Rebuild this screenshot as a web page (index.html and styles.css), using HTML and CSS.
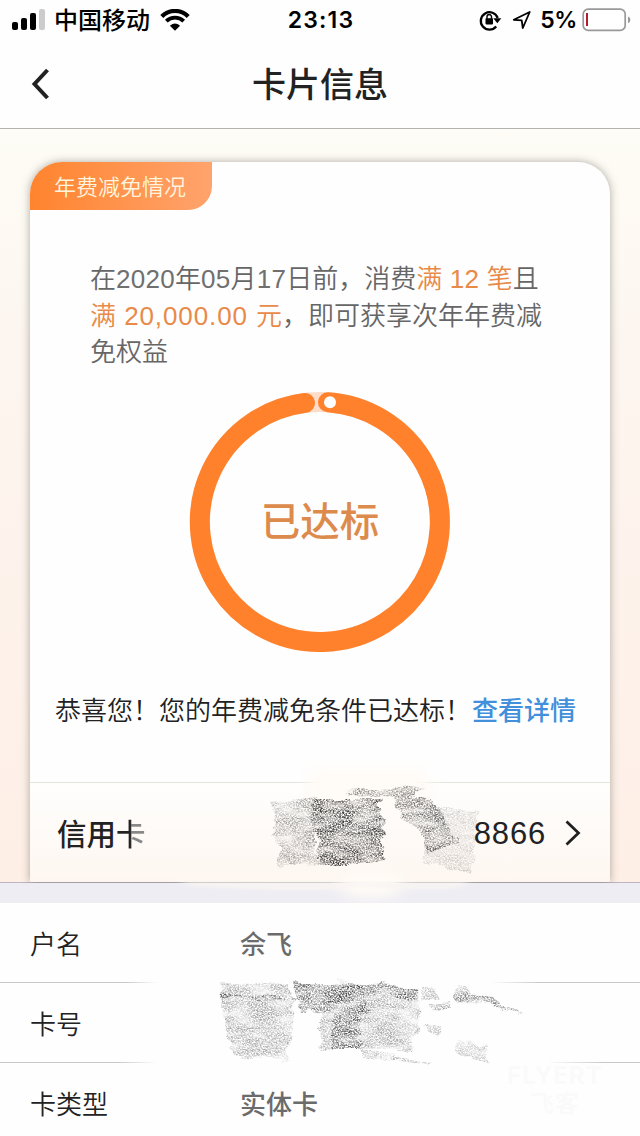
FILE: index.html
```html
<!DOCTYPE html>
<html lang="zh-CN">
<head>
<meta charset="utf-8">
<title>卡片信息</title>
<link rel="stylesheet" href="styles.css">
</head>
<body>
<div class="screen">
  <header class="status">
    <div class="status-left">
      <svg width="34" height="22" viewBox="0 0 34 22"><g fill="#000"><rect x="0" y="13" width="6" height="8" rx="2"/><rect x="9" y="9" width="6" height="12" rx="2"/><rect x="18" y="4" width="6" height="17" rx="2"/></g><rect x="27" y="0" width="6" height="21" rx="2" fill="#ccc"/></svg>
      <span class="carrier">中国移动</span>
      <svg class="wifi" width="30" height="22" viewBox="0 0 30 22"><path d="M1.8 7.4A18.6 18.6 0 0 1 28.200 7.400" fill="none" stroke="#000" stroke-width="4.200"/><path d="M6.300 12.200A12.300 12.300 0 0 1 23.700 12.200" fill="none" stroke="#000" stroke-width="3.800"/><path d="M15 21.800L9.900 16.700Q15 12.300 20.100 16.700Z"/></svg>
    </div>
    <span class="time">23:13</span>
    <div class="status-right">
      <svg class="lock" width="23" height="22" viewBox="0 0 23 22"><path d="M17.200 17.500A8.700 8.700 0 1 1 18.700 9" fill="none" stroke="#000" stroke-width="2.300"/><path d="M14.300 9.200H22.300L18.300 14.200Z"/><rect x="6.500" y="9.200" width="7.500" height="6.200" rx=".8"/><path d="M8 10V7.800A2.250 2.250 0 0 1 12.500 7.800V10" fill="none" stroke="#000" stroke-width="1.400"/></svg>
      <svg class="arrow" width="20" height="20" viewBox="0 0 20 20"><path d="M1.800 9.800L17.700 2L10.800 18L9.700 10.300Z" fill="none" stroke="#000" stroke-width="1.800" stroke-linejoin="round"/></svg>
      <span class="percent">5%</span>
      <svg class="battery" width="50" height="24" viewBox="0 0 50 24"><rect x="1.200" y="1.200" width="42" height="21.200" rx="5" fill="#fff" stroke="#999" stroke-width="1.700"/><rect x="4" y="5" width="2" height="13" fill="#b31d2d"/><path d="M46 8.500Q48.400 9.500 48.400 11.800T46 15.200Z" fill="#999"/></svg>
    </div>
  </header>
  <nav class="nav">
    <svg class="back" width="20" height="34" viewBox="0 0 20 34"><path d="M16.500 3L3.500 17L16.500 31" fill="none" stroke="#222" stroke-width="4"/></svg>
    <h1>卡片信息</h1>
  </nav>
  <main class="hero">
    <section class="card">
      <div class="tab">年费减免情况</div>
      <div class="condition">
        <div>在<b>2020</b>年<b>05</b>月<b>17</b>日前，消费<em>满<b class="twelve"> 12 </b>笔</em>且</div>
        <div><em>满<b class="amount"> 20,000.00 </b>元</em>，即可获享次年年费减</div>
        <div>免权益</div>
      </div>
      <div class="ring">
        <svg width="262" height="262" viewBox="-131 -131 262 262"><circle r="120" fill="none" stroke="#fddcc8" stroke-width="20"/><path d="M8 -119.700A120 120 0 1 1 -15 -119.060" fill="none" stroke="#ff812c" stroke-width="20" stroke-linecap="round"/><circle cx="10" cy="-119.700" r="6" fill="#fff"/></svg>
        <span class="ring-text">已达标</span>
      </div>
      <p class="result">恭喜您！您的年费减免条件已达标！<a>查看详情</a></p>
      <div class="credit">
        <span class="credit-name">信用<i>卡</i></span>
        <span class="digits">8866</span>
        <svg width="18" height="28" viewBox="0 0 18 28"><path d="M2.500 2.500L14.500 14L2.500 25.500" fill="none" stroke="#202020" stroke-width="2.800"/></svg>
      </div>
    </section>
  </main>
  <div class="strip"></div>
  <section class="rows">
    <div class="row"><span class="label">户名</span><span class="value">佘飞</span></div>
    <div class="row"><span class="label">卡号</span></div>
    <div class="row"><span class="label">卡类型</span><span class="value">实体卡</span></div>
  </section>

  <svg class="chalk" width="640" height="1136" viewBox="0 0 640 1136">
    <defs>
      <filter id="grain" x="0" y="760" width="640" height="320" filterUnits="userSpaceOnUse" color-interpolation-filters="sRGB">
        <feTurbulence type="fractalNoise" baseFrequency=".63 .71" numOctaves="3" seed="21" result="n"/>
        <feColorMatrix in="n" values="0 0 0 0 0 0 0 0 0 0 0 0 0 0 0 2.600 0 0 0 -.820" result="dots"/>
        <feTurbulence type="fractalNoise" baseFrequency=".04 .11" numOctaves="3" seed="3" result="wave"/>
        <feDisplacementMap in="SourceGraphic" in2="wave" scale="11" xChannelSelector="R" yChannelSelector="G" result="rough"/>
        <feColorMatrix in="wave" values="0 0 0 0 0 0 0 0 0 0 0 0 0 0 0 0 0 1.800 0 -.150" result="patch"/>
        <feComposite in="rough" in2="dots" operator="in" result="speck"/>
        <feComposite in="speck" in2="patch" operator="in" result="out"/>
        <feGaussianBlur in="out" stdDeviation=".4"/>
      </filter>
      <filter id="soft" x="-20%" y="-20%" width="140%" height="140%"><feGaussianBlur stdDeviation="7"/></filter>
      <filter id="softer" x="-20%" y="-60%" width="140%" height="220%"><feGaussianBlur stdDeviation="4 1.500"/></filter>
      <linearGradient id="fade"><stop offset="0" stop-color="#fefefe" stop-opacity="0"/><stop offset=".08" stop-color="#fefefe"/><stop offset=".88" stop-color="#fefefe"/><stop offset="1" stop-color="#fefefe" stop-opacity="0"/></linearGradient>
    </defs>
    <g fill="#fffbf6" filter="url(#soft)"><path d="M308 770H422L434 793L424 812H308Z"/><ellipse cx="371" cy="884" rx="34" ry="14"/></g>
    <path d="M180 882H470L455 889H385L375 887H350L330 890H270L190 886Z" fill="#f9f5f3" opacity=".85" filter="url(#softer)"/>
    <g fill="url(#fade)"><path d="M125 979H540V986H125Z"/><path d="M118 1060H605V1065H118Z"/></g>
    <g filter="url(#grain)" fill="#333">
      <path d="M272 801L314 796V864L276 866L282 845L270 835L276 822Z" opacity=".42"/>
      <path d="M314 800L380 800L380 815L388 832L380 838L385 860L350 864L314 864L318 840L312 825Z" opacity=".95"/>
      <path d="M313 799L380 799L382 804L314 804Z"/>
      <path d="M344 791L424 788L410 798L348 796Z" opacity=".55"/>
      <path d="M394 798L430 799L456 839L428 854L420 832L400 817Z" opacity=".65"/>
      <path d="M440 838L457 836L457 842L430 853Z"/>
      <path d="M424 803L478 812L472 873L424 864Z" opacity=".22"/>
      <path d="M220 983L288 985L294 998L292 1028L286 1061L232 1054L222 1010Z" opacity=".42"/>
      <path d="M220 993L308 998L308 1001L222 997Z" opacity=".85"/>
      <path d="M294 982L360 983L370 1014L360 1018L362 1050L332 1050L332 1014L300 1010Z" opacity=".75"/>
      <path d="M350 982L416 987L420 1018L412 1050L320 1049L322 1010Z" opacity=".4"/>
      <path d="M350 982L416 987V1001L350 991Z" opacity=".65"/>
      <path d="M362 1050L432 1062L432 1066L362 1055Z" opacity=".35"/>
      <path d="M420 985L436 987L440 1000L420 1000ZM424 1024L440 1024V1034L427 1030Z" opacity=".3"/>
      <path d="M430 1003L450 1003V1008L430 1007ZM456 986L522 1012L476 1003L456 1004Z" opacity=".6"/>
      <path d="M456 1042L484 1046L488 1063L458 1053Z" opacity=".28"/>
    </g>
  </svg>
  <div class="watermark"><span>FLYERT</span><span>飞客</span></div>
</div>
</body>
</html>
```
FILE: styles.css
```css
* { box-sizing: border-box; }
body { margin: 0; background: #fff; font-family: "Noto Sans CJK SC", sans-serif; color: #222; }
svg { display: block; flex: none; }
.screen { position: relative; width: 640px; height: 1136px; overflow: hidden; display: flex; flex-direction: column; }
.status { height: 40px; flex: none; display: grid; grid-template-columns: 1fr auto 1fr; padding: 0 10px 0 12px; align-items: center; background: #fefefe; }
.status-left, .status-right { display: flex; align-items: center; }
.status-right { justify-content: flex-end; }
.carrier { font-size: 24px; line-height: 36px; height: 38px; font-weight: 500; margin-left: 8px; color: #000; white-space: nowrap; }
.wifi { margin-left: 10px; }
.time, .percent { font-family: Inter, sans-serif; font-weight: 600; font-size: 23px; color: #000; line-height: 40px; }
.time { letter-spacing: 1.200px; }
.lock { margin-right: 10px; }
.arrow { margin-right: 8px; }
.percent { margin-right: 5px; letter-spacing: -.4px; }
.battery { margin-right: -2px; }
.nav { height: 89px; flex: none; display: grid; grid-template-columns: 100px 1fr 100px; align-items: center; border-bottom: 1px solid #b3b3b0; background: #fefefe; }
.back { margin-left: 31px; }
.nav h1 { margin: -2px 0 0; text-align: center; font-size: 34px; line-height: 48px; font-weight: 500; }
.hero { height: 754px; flex: none; padding: 33px 30px 0; background: linear-gradient(#fefcf6, #fdf5ef 32%, #feefe6); border-bottom: 1px solid #bdb6bd; }
.card { height: 720px; display: flex; flex-direction: column; background: #fefefe; border-radius: 32px 32px 0 0; box-shadow: 0 0 9px rgba(60, 60, 50, .42); overflow: hidden; }
.tab { width: 182px; height: 48px; flex: none; border-radius: 0 0 24px 0; background: linear-gradient(90deg, #ff842e, #ffa36d); color: #fff5df; font-size: 22px; line-height: 47px; padding-left: 24px; font-weight: 350; white-space: nowrap; }
.condition { padding: 49px 0 0 60px; font-size: 26px; line-height: 36.500px; height: 181px; flex: none; color: #666; font-weight: 350; white-space: nowrap; }
.condition div { height: 36.500px; }
.condition b { font-family: "Liberation Sans", sans-serif; font-weight: 400; font-size: 26px; line-height: 30px; white-space: pre; color: #707070; letter-spacing: .3px; }
.condition em { font-style: normal; color: #e88a48; }
.condition em b { color: #e88a48; }
.condition .amount { letter-spacing: .9px; }
.ring { display: grid; place-items: center; height: 262px; flex: none; }
.ring svg, .ring-text { grid-area: 1 / 1; }
.ring-text { font-size: 39.500px; font-weight: 500; color: #dd8b4d; line-height: 60px; padding-bottom: 6px; }
.result { margin: 26px 0 0 25px; font-size: 26px; line-height: 60px; white-space: nowrap; font-weight: 350; }
.result a { color: #428fdb; font-weight: 500; margin-left: 1px; }
.credit { height: 100px; margin-top: auto; flex: none; display: flex; align-items: center; padding: 0 28px 0 27px; border-top: 1px solid #e6e5dc; background: linear-gradient(#fefefd, #fef7f1); }
.credit-name { font-size: 29.500px; font-weight: 500; line-height: 60px; margin: -2px auto 0 0; }
.credit-name i { font-style: normal; background: linear-gradient(90deg, #222 48%, #888 52%); -webkit-background-clip: text; background-clip: text; color: transparent; }
.digits { font-family: "Liberation Sans", sans-serif; font-size: 31px; letter-spacing: .8px; margin: 2px 18px 0 0; }
.strip { height: 20px; flex: none; background: #eeedf3; }
.row { height: 80px; display: grid; grid-template-columns: 210px 1fr; align-items: center; padding-left: 30px; border-bottom: 1px solid #c8c8ca; background: #fefefe; }
.label, .value { font-size: 26px; line-height: 60px; }
.label { font-weight: 350; }
.value { color: #6b6b6b; font-weight: 500; }
.chalk { position: absolute; inset: 0; pointer-events: none; }
.watermark { position: absolute; left: 503px; top: 1062px; width: 104px; text-align: center; color: #fafafa; font: 700 24px/28px Inter, "Noto Sans CJK SC", sans-serif; display: flex; flex-direction: column; letter-spacing: 1px; }
```
